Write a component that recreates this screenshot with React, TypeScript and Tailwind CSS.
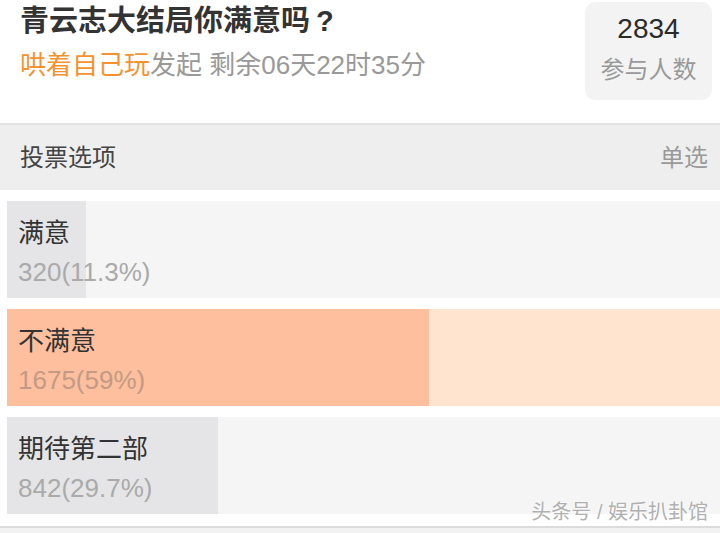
import React from 'react';

const font = { fontFamily: '"Liberation Sans", "Noto Sans CJK SC", sans-serif' };

interface OptionProps {
  label: string;
  count: string;
  percent: number;
  top?: boolean;
}

function VoteOption({ label, count, percent, top }: OptionProps) {
  return (
    <div className={`relative h-[97px] ${top ? 'bg-[#ffe5d0]' : 'bg-[#f5f5f5]'}`}>
      <div
        className={`absolute left-0 top-0 bottom-0 ${top ? 'bg-[#fdbf9d]' : 'bg-[#e5e5e7]'}`}
        style={{ width: `${percent}%` }}
      />
      <div className="relative flex flex-col pl-[11px] pt-[16px]">
        <div className="text-[26px] leading-[32px] text-[#333]">{label}</div>
        <div className={`mt-[7px] text-[26px] leading-[32px] ${top ? 'text-[#c39a85]' : 'text-[#aaa]'}`}>{count}</div>
      </div>
    </div>
  );
}

export default function App() {
  return (
    <div className="relative w-[720px] h-[533px] bg-white overflow-hidden" style={font}>
      {/* 头部 */}
      <div className="flex h-[123px] pl-[20px] pr-[8px] pt-[2px]">
        <div className="flex-1 pt-[4px]">
          <div className="text-[29px] leading-[30px] font-bold text-[#333]">
            青云志大结局你满意吗<span className="ml-[6px]">?</span>
          </div>
          <div className="mt-[14px] text-[26px] leading-[30px] text-[#999]">
            <span className="text-[#f5922f]">哄着自己玩</span>发起 剩余06天22时35分
          </div>
        </div>
        <div className="w-[127px] h-[98px] rounded-[10px] bg-[#f3f3f3] flex flex-col items-center pt-[10px]">
          <div className="text-[28px] leading-[34px] text-[#2b2b2b]">2834</div>
          <div className="mt-[10px] text-[24px] leading-[28px] text-[#999]">参与人数</div>
        </div>
      </div>

      {/* 投票选项 */}
      <div className="border-t-2 border-[#e2e2e2] bg-[#eeeeee] h-[67px] flex items-center justify-between pl-[20px] pr-[12px]">
        <span className="text-[24px] text-[#444]">投票选项</span>
        <span className="text-[24px] text-[#999]">单选</span>
      </div>

      <div className="flex flex-col gap-[11px] pl-[7px] pt-[11px]">
        <VoteOption label="满意" count="320(11.3%)" percent={11.1} />
        <VoteOption label="不满意" count="1675(59%)" percent={59.2} top />
        <VoteOption label="期待第二部" count="842(29.7%)" percent={29.6} />
      </div>

      <div className="mt-[12px] border-t-2 border-[#dcdcdc] bg-[#f2f2f2] h-[10px]" />

      {/* 水印 */}
      <div
        className="absolute right-[12px] bottom-[9px] text-[20px] leading-[24px] text-[#b0b0b0]"
        style={{ textShadow: '0 0 2px #fff, 0 0 2px #fff' }}
      >
        头条号 / 娱乐扒卦馆
      </div>
    </div>
  );
}
